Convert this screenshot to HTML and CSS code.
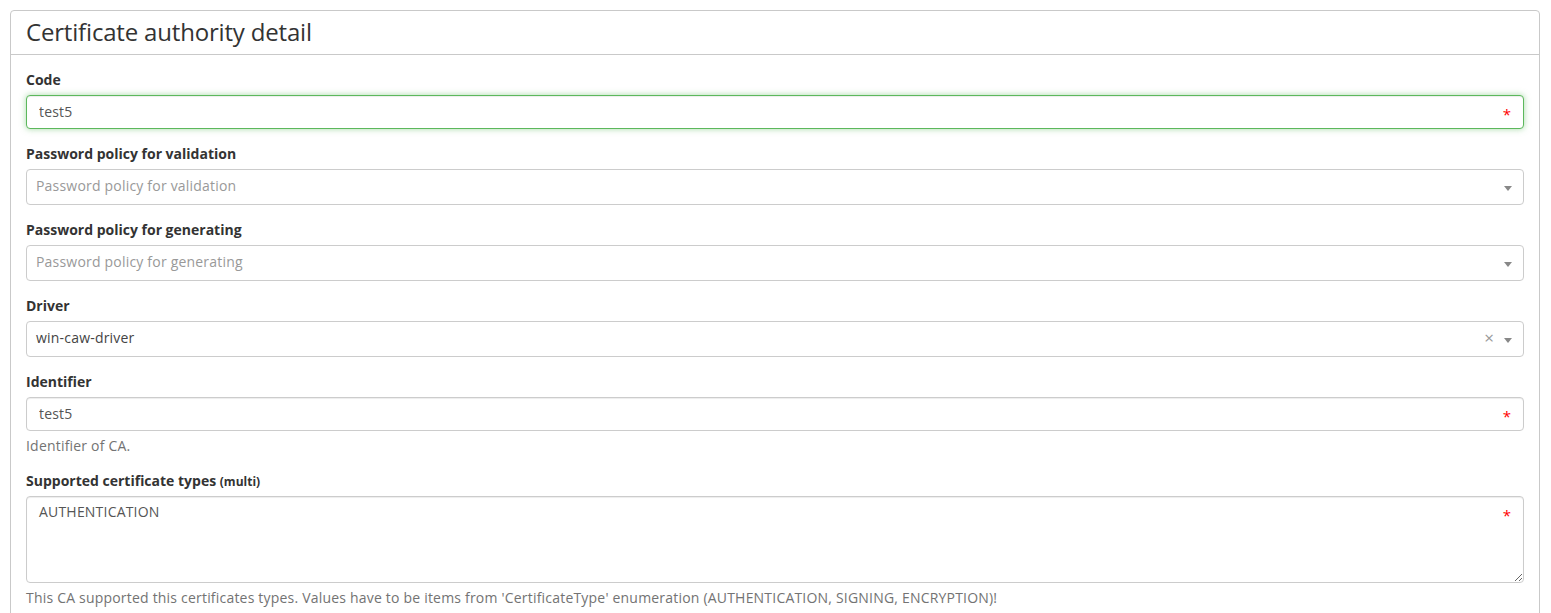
FILE: index.html
```html
<!DOCTYPE html>
<html lang="en">
<head>
<meta charset="utf-8">
<title>Certificate authority detail</title>
<link rel="stylesheet" href="styles.css">
</head>
<body>
<div class="page">
  <div class="panel">
    <div class="panel-heading">
      <h3 class="panel-title">Certificate authority detail</h3>
    </div>
    <div class="panel-body">
      <div class="form-group">
        <label class="control-label">Code</label>
        <div class="input-wrap">
          <input class="form-control is-valid" type="text" value="test5">
          <span class="required">*</span>
        </div>
      </div>

      <div class="form-group">
        <label class="control-label">Password policy for validation</label>
        <div class="select">
          <span class="select-text placeholder">Password policy for validation</span>
          <span class="select-arrow"></span>
        </div>
      </div>

      <div class="form-group">
        <label class="control-label">Password policy for generating</label>
        <div class="select">
          <span class="select-text placeholder">Password policy for generating</span>
          <span class="select-arrow"></span>
        </div>
      </div>

      <div class="form-group">
        <label class="control-label">Driver</label>
        <div class="select">
          <span class="select-text">win-caw-driver</span>
          <span class="select-clear">×</span>
          <span class="select-arrow"></span>
        </div>
      </div>

      <div class="form-group">
        <label class="control-label">Identifier</label>
        <div class="input-wrap">
          <input class="form-control" type="text" value="test5">
          <span class="required">*</span>
        </div>
        <span class="help-block">Identifier of CA.</span>
      </div>

      <div class="form-group">
        <label class="control-label">Supported certificate types <small>(multi)</small></label>
        <div class="input-wrap">
          <textarea class="form-control textarea" rows="4">AUTHENTICATION</textarea>
          <span class="required">*</span>
        </div>
        <span class="help-block">This CA supported this certificates types. Values have to be items from 'CertificateType' enumeration (AUTHENTICATION, SIGNING, ENCRYPTION)!</span>
      </div>
    </div>
  </div>
</div>
</body>
</html>
```

FILE: styles.css
```css
* {
  box-sizing: border-box;
}

html, body {
  margin: 0;
  background: #fff;
}

body {
  font-family: "Open Sans", "Liberation Sans", sans-serif;
  font-size: 14px;
  line-height: 20px;
  color: #333;
}

.page {
  padding: 10px 11px 0 10px;
}

.panel {
  border: 1px solid #c9c9c9;
  border-radius: 4px;
  background: #fff;
}

.panel-heading {
  padding: 7px 15px 8px;
  border-bottom: 1px solid #c9c9c9;
}

.panel-title {
  margin: 0;
  font-size: 24px;
  font-weight: 400;
  line-height: 28px;
  letter-spacing: -0.18px;
  color: #333;
}

.panel-body {
  padding: 15px 15px 0;
}

.form-group {
  margin-bottom: 15px;
}

.control-label {
  display: block;
  height: 20px;
  font-weight: 700;
  margin-bottom: 5px;
  line-height: 20px;
}

.control-label small {
  font-size: 12px;
  font-weight: 700;
  line-height: 1;
}

.input-wrap {
  position: relative;
}

.form-control {
  display: block;
  width: 100%;
  height: 34px;
  padding: 5px 12px 7px;
  font-family: inherit;
  font-size: 14px;
  line-height: 20px;
  letter-spacing: 0.2px;
  color: #555;
  background: #fff;
  border: 1px solid #ccc;
  border-radius: 4px;
  box-shadow: inset 0 1px 1px rgba(0, 0, 0, 0.075);
  outline: none;
}

.form-control.is-valid {
  border-color: #5cb85c;
  box-shadow: inset 0 1px 1px rgba(0, 0, 0, 0.075), 0 0 6px rgba(92, 184, 92, 0.55);
}

.textarea {
  height: 87px;
  resize: vertical;
}

.required {
  position: absolute;
  top: 0;
  right: 0;
  width: 34px;
  height: 34px;
  text-align: center;
  line-height: 34px;
  color: #f00;
  font-size: 15px;
  padding-top: 2px;
  pointer-events: none;
}

.help-block {
  display: block;
  margin-top: 5px;
  margin-bottom: 10px;
  letter-spacing: 0.2px;
  color: #737373;
}

.select {
  display: flex;
  align-items: center;
  height: 36px;
  padding: 0 11px 2px 9px;
  border: 1px solid #ccc;
  border-radius: 4px;
  background: #fff;
}

.select-text {
  flex: 1;
  color: #444;
  letter-spacing: 0.2px;
}

.select-text.placeholder {
  color: #999;
}

.select-clear {
  color: #999;
  font-size: 17px;
  margin-right: 10px;
  line-height: 20px;
}

.select-arrow {
  width: 0;
  height: 0;
  border-style: solid;
  border-width: 5px 4px 0 4px;
  border-color: #888 transparent transparent transparent;
  margin-top: 4px;
}
```
